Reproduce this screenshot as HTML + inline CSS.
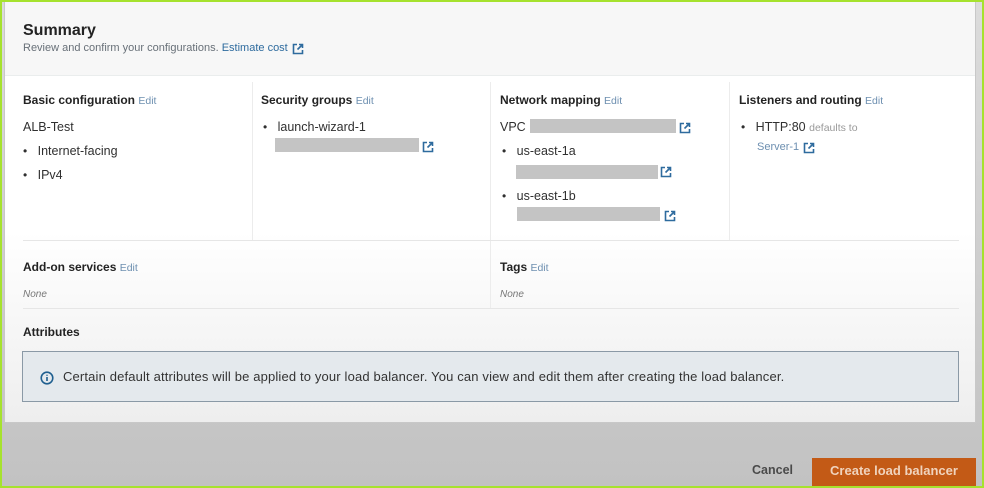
<!DOCTYPE html>
<html><head><meta charset="utf-8"><style>
*{margin:0;padding:0;box-sizing:border-box}
body{width:984px;height:488px;overflow:hidden;font-family:"Liberation Sans",sans-serif;position:relative;background:linear-gradient(#dcdcdc,#c2c2c2);color:#16191f}
.frame{position:absolute;inset:0;border:2px solid #a6e22e;z-index:10;pointer-events:none}
.card{position:absolute;left:4px;top:0;width:972px;height:423px;background:linear-gradient(#fff 0,#fff 55%,#eeeeee 100%);border:1px solid #c8c8c8;border-top:none}
.hdr{position:absolute;left:0;top:0;width:100%;height:76px;background:#f7f7f7;border-bottom:1px solid #eaeded}
.a{position:absolute;white-space:nowrap}
h1{font-size:16px;font-weight:bold;color:#232323}
.sub{font-size:11px;color:#687078}
.link{color:#2e6b9e}
.h{font-size:12px;font-weight:bold;color:#232323}
.e{font-size:10.5px;font-weight:normal;color:#6d8fb0}
.t{font-size:12.5px;color:#303030}
.dot{font-size:12px}
.red{position:absolute;background:#c4c4c4;height:14px}
.ext{position:absolute;width:12px;height:12px}
.vl{position:absolute;width:1px;background:#ececec}
.hl{position:absolute;height:1px;background:#e6e6e6}
i{font-size:10px;color:#777}
.info{position:absolute;left:22px;top:351px;width:937px;height:51px;background:#e4e9ed;border:1px solid #8a99a6}
.btn{position:absolute;left:812px;top:458px;width:164px;height:30px;background:#c35a16;color:#f0d3bd;font-weight:bold;font-size:13px;text-align:center;line-height:26px}
</style></head><body>
<div class="card">
<div class="hdr"></div>
<div class="a" style="left:18px;top:22px"><h1>Summary</h1></div>
<div class="a sub" style="left:18px;top:42px">Review and confirm your configurations. <span class="link">Estimate cost</span></div>
<svg class="ext" style="left:287px;top:43px" viewBox="0 0 12 12"><path d="M5 1.5H1.5v9h9V7M7 1.5h3.5V5M10.5 1.5 5.5 6.5" fill="none" stroke="#2e6b9e" stroke-width="1.6"/></svg>

<div class="vl" style="left:247px;top:82px;height:158px"></div>
<div class="vl" style="left:485px;top:82px;height:226px"></div>
<div class="vl" style="left:724px;top:82px;height:158px"></div>
<div class="hl" style="left:18px;top:240px;width:936px"></div>
<div class="hl" style="left:18px;top:308px;width:936px"></div>

<div class="a h" style="left:18px;top:93px">Basic configuration <span class="e">Edit</span></div>
<div class="a t" style="left:18px;top:120px">ALB-Test</div>
<div class="a t" style="left:18px;top:144px"><span class="dot">•</span>&nbsp;&nbsp;&nbsp;Internet-facing</div>
<div class="a t" style="left:18px;top:168px"><span class="dot">•</span>&nbsp;&nbsp;&nbsp;IPv4</div>

<div class="a h" style="left:256px;top:93px">Security groups <span class="e">Edit</span></div>
<div class="a t" style="left:258px;top:120px"><span class="dot">•</span>&nbsp;&nbsp;&nbsp;launch-wizard-1</div>
<div class="red" style="left:270px;top:138px;width:144px"></div>
<svg class="ext" style="left:417px;top:141px" viewBox="0 0 12 12"><path d="M5 1.5H1.5v9h9V7M7 1.5h3.5V5M10.5 1.5 5.5 6.5" fill="none" stroke="#2e6b9e" stroke-width="1.6"/></svg>

<div class="a h" style="left:495px;top:93px">Network mapping <span class="e">Edit</span></div>
<div class="a t" style="left:495px;top:120px">VPC</div>
<div class="red" style="left:525px;top:119px;width:146px"></div>
<svg class="ext" style="left:674px;top:122px" viewBox="0 0 12 12"><path d="M5 1.5H1.5v9h9V7M7 1.5h3.5V5M10.5 1.5 5.5 6.5" fill="none" stroke="#2e6b9e" stroke-width="1.6"/></svg>
<div class="a t" style="left:497px;top:144px"><span class="dot">•</span>&nbsp;&nbsp;&nbsp;us-east-1a</div>
<div class="red" style="left:511px;top:165px;width:142px"></div>
<svg class="ext" style="left:655px;top:166px" viewBox="0 0 12 12"><path d="M5 1.5H1.5v9h9V7M7 1.5h3.5V5M10.5 1.5 5.5 6.5" fill="none" stroke="#2e6b9e" stroke-width="1.6"/></svg>
<div class="a t" style="left:497px;top:189px"><span class="dot">•</span>&nbsp;&nbsp;&nbsp;us-east-1b</div>
<div class="red" style="left:512px;top:207px;width:143px"></div>
<svg class="ext" style="left:659px;top:210px" viewBox="0 0 12 12"><path d="M5 1.5H1.5v9h9V7M7 1.5h3.5V5M10.5 1.5 5.5 6.5" fill="none" stroke="#2e6b9e" stroke-width="1.6"/></svg>

<div class="a h" style="left:734px;top:93px">Listeners and routing <span class="e">Edit</span></div>
<div class="a t" style="left:736px;top:120px"><span class="dot">•</span>&nbsp;&nbsp;&nbsp;HTTP:80 <span style="font-size:10.5px;color:#999">defaults to</span></div>
<div class="a" style="left:752px;top:141px;font-size:11px;color:#6d8fb0">Server-1</div>
<svg class="ext" style="left:798px;top:142px" viewBox="0 0 12 12"><path d="M5 1.5H1.5v9h9V7M7 1.5h3.5V5M10.5 1.5 5.5 6.5" fill="none" stroke="#2e6b9e" stroke-width="1.6"/></svg>

<div class="a h" style="left:18px;top:260px">Add-on services <span class="e">Edit</span></div>
<div class="a" style="left:18px;top:284px"><i>None</i></div>
<div class="a h" style="left:495px;top:260px">Tags <span class="e">Edit</span></div>
<div class="a" style="left:495px;top:284px"><i>None</i></div>

<div class="a h" style="left:18px;top:325px">Attributes</div>
</div>
<div class="info">
<svg style="position:absolute;left:17px;top:19px" width="14" height="14" viewBox="0 0 14 14"><circle cx="7" cy="7" r="5.8" fill="none" stroke="#1f5f8f" stroke-width="1.6"/><path d="M7 6v4M7 3.8v1" stroke="#1f5f8f" stroke-width="1.6"/></svg>
<div class="a" style="left:40px;top:17px;font-size:13px;letter-spacing:0.15px;color:#333">Certain default attributes will be applied to your load balancer. You can view and edit them after creating the load balancer.</div>
</div>
<div class="a" style="left:752px;top:463px;font-size:12.5px;font-weight:bold;color:#4a4a4a">Cancel</div>
<div class="btn">Create load balancer</div>
<div class="frame"></div>
</body></html>
